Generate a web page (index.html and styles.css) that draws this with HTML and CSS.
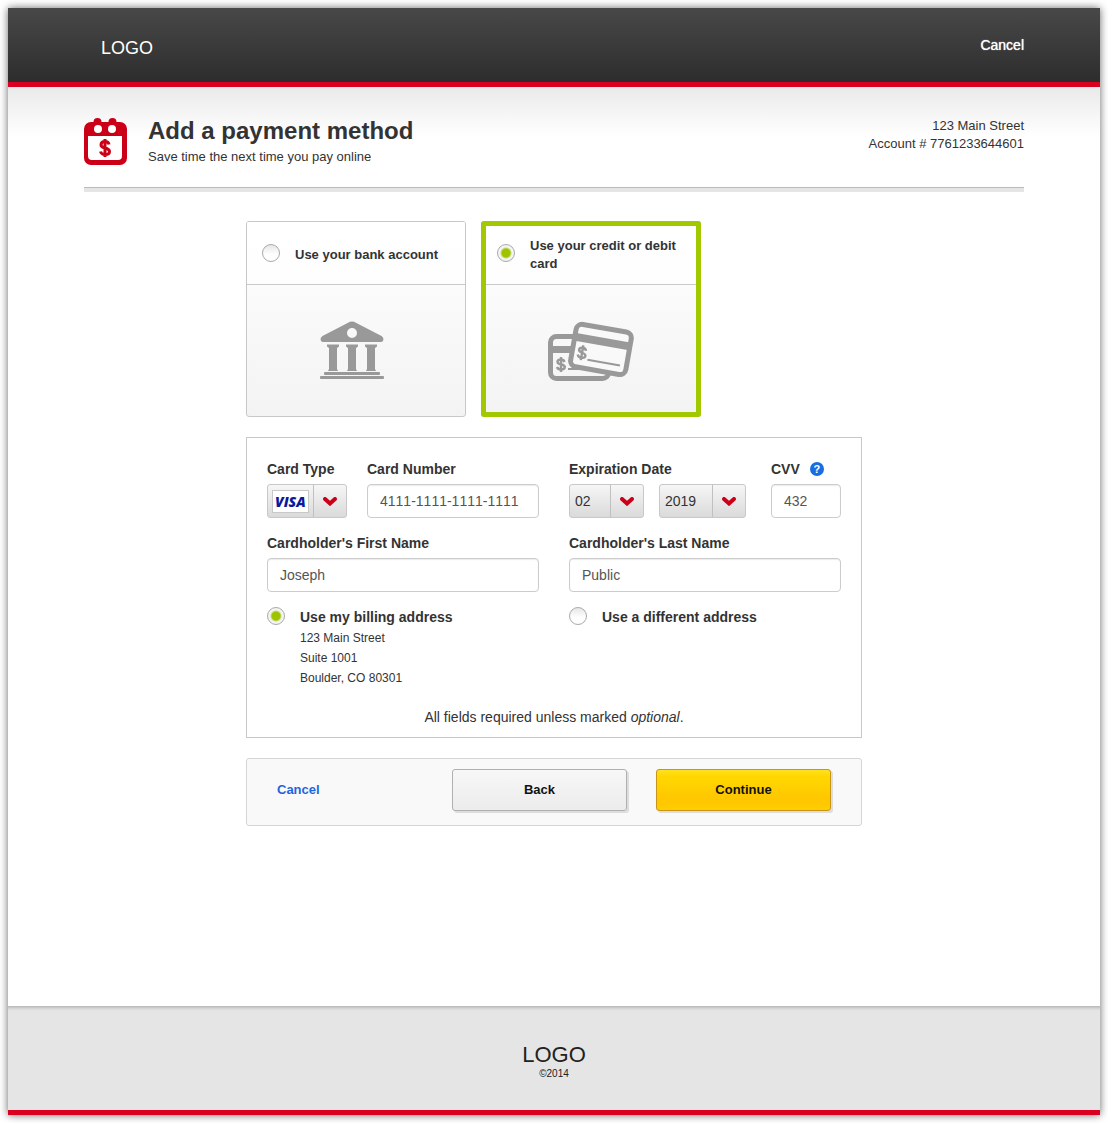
FILE: index.html
```html
<!DOCTYPE html>
<html lang="en">
<head>
<meta charset="utf-8">
<meta name="viewport" content="width=device-width, initial-scale=1">
<title>Add a payment method</title>
<link rel="stylesheet" href="styles.css">
</head>
<body>
<div class="page">
  <header class="topbar">
    <div class="container topbar-inner">
      <span class="logo">LOGO</span>
      <a class="topbar-cancel" href="#">Cancel</a>
    </div>
  </header>

  <main class="main">
    <div class="container">
      <div class="page-head">
        <svg class="page-icon" width="43" height="49" viewBox="0 0 43 49" aria-hidden="true">
          <circle cx="13.500" cy="5" r="4" fill="#cb0018"/>
          <circle cx="28.500" cy="5" r="4" fill="#cb0018"/>
          <rect x="0" y="5" width="43" height="43" rx="7" fill="#cb0018"/>
          <circle cx="14" cy="12" r="4" fill="#fff"/>
          <circle cx="28" cy="12" r="4" fill="#fff"/>
          <path d="M4 19H38V39Q38 43 34 43H8Q4 43 4 39Z" fill="#fff"/>
          <path d="M25 27.500C24.500 25 23 24.500 21 24.500C18.500 24.500 17 26 17 28C17 32 25.500 30 25.500 34.500C25.500 36.500 23.500 37.500 21 37.500C18.500 37.500 17 36.500 16.500 34.500M21 22V40" fill="none" stroke="#cb0018" stroke-width="3"/>
        </svg>
        <div class="page-titles">
          <h1>Add a payment method</h1>
          <p>Save time the next time you pay online</p>
        </div>
        <div class="account">
          <div>123 Main Street</div>
          <div>Account # 7761233644601</div>
        </div>
      </div>
    </div>

    <form class="payment">
      <div class="methods">
        <label class="method">
          <span class="method-title">
            <input class="radio" type="radio" name="method">
            <span class="method-text">Use your bank account</span>
          </span>
          <span class="method-art">
            <svg width="72" height="60" viewBox="0 0 72 60" aria-hidden="true" fill="#999">
              <path fill-rule="evenodd" d="M30 .8Q32 0 34 .8L61.500 15Q63.500 16 63.500 18.500Q63 21 61 21H3Q1 21 .5 18.500Q.5 16 2.500 15ZM32 7A5 5 0 1 0 32 17A5 5 0 1 0 32 7Z"/>
              <path d="M7 23.500H19V25.500L17 27V48L18 50H8L9 48V27L7 25.500ZM26 23.500H38V25.500L36 27V48L37 50H27L28 48V27L26 25.500ZM45 23.500H57V25.500L55 27V48L56 50H46L47 48V27L45 25.500Z"/>
              <rect x="4" y="51" width="56" height="3" rx="1"/>
              <rect x="0" y="55" width="64" height="3" rx="1"/>
            </svg>
          </span>
        </label>
        <label class="method method-selected">
          <span class="method-title">
            <input class="radio" type="radio" name="method" checked>
            <span class="method-text">Use your credit or debit card</span>
          </span>
          <span class="method-art">
            <svg width="86" height="62" viewBox="0 0 86 62" aria-hidden="true" fill="none" stroke="#999">
              <rect x="2.500" y="16.500" width="58" height="42" rx="6" stroke-width="5"/>
              <path d="M2 29.500H40" stroke-width="7"/>
              <path d="M16.500 42C16 40.500 15 39.500 13 39.500C11 39.500 9.500 40.500 9.500 42C9.500 45.500 16.800 43.500 16.800 47C16.800 48.500 15 49.500 13 49.500C11 49.500 9.500 48.500 9 47M13 37V52" stroke-width="2.400"/>
              <path d="M20 49H50" stroke-width="2"/>
              <g transform="translate(27 1) rotate(10)">
                <rect x="2.500" y="2" width="56" height="43" rx="6" fill="#f9f9f9" stroke-width="5"/>
                <path d="M2 15.500H58" stroke-width="8"/>
                <path d="M16 27.500C15.500 26 14.500 25 12.500 25C10.500 25 9 26 9 27.500C9 31 16.300 29 16.300 32.500C16.300 34 14.500 35 12.500 35C10.500 35 9 34 8.500 32.500M12.500 22.500V37.500" stroke-width="2.400"/>
                <path d="M19 36H52" stroke-width="2"/>
              </g>
            </svg>
          </span>
        </label>
      </div>

      <div class="panel">
        <div class="fields">
          <div class="row">
            <div class="field">
              <label for="card-type">Card Type</label>
              <div class="select card-type">
                <span class="badge"></span>
                <select id="card-type"><option>VISA</option></select>
                <svg class="chevron" width="14" height="9" viewBox="0 0 14 9" aria-hidden="true"><path d="M2 2L7 6.500L12 2" fill="none" stroke="#cb0018" stroke-width="4" stroke-linecap="round"/></svg>
              </div>
            </div>
            <div class="field grow">
              <label for="card-number">Card Number</label>
              <input class="text" id="card-number" type="text" value="4111-1111-1111-1111">
            </div>
          </div>
          <div class="row row-expiry">
            <div class="field">
              <label for="exp-month">Expiration Date</label>
              <div class="expiry">
                <div class="select month">
                  <select id="exp-month"><option>02</option></select>
                  <svg class="chevron" width="14" height="9" viewBox="0 0 14 9" aria-hidden="true"><path d="M2 2L7 6.500L12 2" fill="none" stroke="#cb0018" stroke-width="4" stroke-linecap="round"/></svg>
                </div>
                <div class="select year">
                  <select aria-label="Expiration year"><option>2019</option></select>
                  <svg class="chevron" width="14" height="9" viewBox="0 0 14 9" aria-hidden="true"><path d="M2 2L7 6.500L12 2" fill="none" stroke="#cb0018" stroke-width="4" stroke-linecap="round"/></svg>
                </div>
              </div>
            </div>
            <div class="field cvv">
              <div class="cvv-label">
                <label for="cvv">CVV</label>
                <button class="help" type="button">?</button>
              </div>
              <input class="text" id="cvv" type="text" value="432">
            </div>
          </div>

          <div class="field">
            <label for="first-name">Cardholder's First Name</label>
            <input class="text" id="first-name" type="text" value="Joseph">
          </div>
          <div class="field">
            <label for="last-name">Cardholder's Last Name</label>
            <input class="text" id="last-name" type="text" value="Public">
          </div>

          <div class="choice">
            <input class="radio" id="addr-billing" type="radio" name="address" checked>
            <div>
              <label for="addr-billing">Use my billing address</label>
              <address>123 Main Street<br>Suite 1001<br>Boulder, CO 80301</address>
            </div>
          </div>
          <div class="choice">
            <input class="radio" id="addr-other" type="radio" name="address">
            <label for="addr-other">Use a different address</label>
          </div>
        </div>
        <p class="note">All fields required unless marked <em>optional</em>.</p>
      </div>

      <div class="actions">
        <a class="actions-cancel" href="#">Cancel</a>
        <button class="button" type="button">Back</button>
        <button class="button button-primary" type="submit">Continue</button>
      </div>
    </form>
  </main>

  <footer class="footer">
    <div class="footer-logo">LOGO</div>
    <div class="copyright">©2014</div>
  </footer>
</div>
</body>
</html>
```
FILE: styles.css
```css
*, *::before, *::after { box-sizing: border-box; }

body {
  margin: 0;
  padding: 8px;
  background: #fff;
  color: #333;
  font: 13px/18px "Liberation Sans", Arial, Helvetica, sans-serif;
}

h1, p { margin: 0; }
a { text-decoration: none; }
input, select, button { font: inherit; margin: 0; }

.page {
  display: flex;
  flex-direction: column;
  min-height: calc(100vh - 16px);
  background: #fff;
  box-shadow: 0 0 8px rgba(0, 0, 0, 0.6);
}

.container {
  width: 100%;
  max-width: 940px;
  margin: 0 auto;
}

/* Top bar */
.topbar {
  background: linear-gradient(#484848, #2d2d2d);
  border-bottom: 5px solid #dc0020;
}
.topbar-inner {
  display: flex;
  justify-content: space-between;
  padding: 27px 0 21px 17px;
}
.logo {
  color: #fff;
  font-size: 18px;
  line-height: 26px;
}
.topbar-cancel {
  color: #fff;
  font-size: 14px;
  line-height: 20px;
  text-shadow: 0 0 1px #fff;
}

/* Page heading */
.main {
  flex: 1;
  background: linear-gradient(#eaeaea, #fff 50px);
}
.page-head {
  display: flex;
  align-items: flex-start;
  padding: 30px 0 21px;
  border-bottom: 4px solid #e5e5e5;
  box-shadow: inset 0 -1px 0 #bbb;
}
.page-icon {
  flex: none;
  margin-right: 21px;
}
.page-titles { flex: 1; }
.page-titles h1 {
  margin-bottom: 2px;
  font-size: 24px;
  line-height: 28px;
}
.page-titles p { line-height: 20px; }
.account { text-align: right; }

/* Payment methods */
.payment {
  width: 100%;
  max-width: 616px;
  margin: 29px auto 0;
}
.methods {
  display: flex;
  gap: 15px;
}
.method {
  display: flex;
  flex-direction: column;
  width: 220px;
  border: 1px solid #c8c8c8;
  border-radius: 3px;
  background: linear-gradient(#fff, #f3f3f3);
}
.method-selected {
  outline: 5px solid #a2c800;
  outline-offset: -5px;
}
.method-title {
  display: flex;
  align-items: center;
  gap: 15px;
  height: 63px;
  padding: 0 16px 0 15px;
  border-bottom: 1px solid #c8c8c8;
  background: rgba(255, 255, 255, 0.5);
}
.method-text {
  padding-top: 4px;
  font-weight: bold;
}
.method-art {
  display: flex;
  justify-content: center;
  align-items: center;
  height: 131px;
}

.radio {
  appearance: none;
  flex: none;
  width: 18px;
  height: 18px;
  border: 1px solid #aaa;
  border-radius: 50%;
  background: linear-gradient(#e6e6e6, #fff 60%);
}
.radio:checked {
  background: radial-gradient(circle, #9ec400 4px, #f4f4f4 6px);
}

/* Card form */
.panel {
  margin-top: 20px;
  padding: 21px 20px 10px;
  border: 1px solid #c8c8c8;
}
.fields {
  display: grid;
  grid-template-columns: 1fr 1fr;
  gap: 15px 30px;
}
.row {
  display: flex;
  gap: 20px;
}
.row-expiry { justify-content: space-between; }
.field {
  display: flex;
  flex-direction: column;
  gap: 5px;
}
.grow { flex: 1; }
.field label,
.choice label {
  font-size: 14px;
  font-weight: bold;
  line-height: 20px;
}
.text {
  width: 100%;
  height: 34px;
  padding: 0 12px;
  border: 1px solid #ccc;
  border-radius: 4px;
  background: #fff;
  box-shadow: inset 0 1px 1px rgba(0, 0, 0, 0.08);
  color: #555;
  font-size: 14px;
  font-kerning: none;
}
.expiry {
  display: flex;
  gap: 15px;
}

.select {
  display: grid;
  grid-template-columns: 1fr 33px;
  align-items: center;
  height: 34px;
  border: 1px solid #c8c8c8;
  border-radius: 3px;
  background: linear-gradient(#f6f6f6, #dadada);
}
.select select {
  grid-area: 1 / 1 / 2 / 3;
  width: 100%;
  height: 32px;
  padding: 0 5px;
  appearance: none;
  border: 0;
  background: none;
  color: #333;
  font-size: 14px;
}
.chevron {
  grid-area: 1 / 2 / 2 / 3;
  justify-self: center;
  pointer-events: none;
}
.select::after {
  content: "";
  grid-area: 1 / 2 / 2 / 3;
  height: 32px;
  border-left: 1px solid #c0c0c0;
  pointer-events: none;
}
.card-type { width: 80px; }
.month { width: 75px; }
.year { width: 87px; }
.badge {
  grid-area: 1 / 1 / 2 / 2;
  justify-self: center;
  width: 37px;
  height: 23px;
  border: 1px solid #c8c8c8;
  background: #fff;
}
.select.card-type select {
  padding: 0 7px;
  color: #0b189c;
  font: italic 800 14px "Open Sans", "Liberation Sans", sans-serif;
}

.cvv { width: 70px; }
.cvv-label {
  display: flex;
  align-items: center;
  gap: 10px;
  height: 20px;
}
.help {
  width: 14px;
  height: 14px;
  padding: 0;
  border: 0;
  border-radius: 50%;
  background: #1a6de0;
  color: #fff;
  font-size: 11px;
  font-weight: bold;
  line-height: 14px;
}

.choice {
  display: flex;
  align-items: flex-start;
  gap: 15px;
}
address {
  margin-top: 1px;
  font-size: 12px;
  font-style: normal;
  line-height: 20px;
}
.note {
  margin-top: 19px;
  font-size: 14px;
  line-height: 20px;
  text-align: center;
}

/* Actions */
.actions {
  display: flex;
  align-items: center;
  gap: 29px;
  margin: 20px 0;
  padding: 10px 30px 14px;
  border: 1px solid #d5d5d5;
  border-radius: 3px;
  background: #f9f9f9;
}
.actions-cancel {
  flex: 1;
  color: #1f66dd;
  font-weight: bold;
}
.button {
  width: 175px;
  height: 42px;
  border: 1px solid #b0b0b0;
  border-radius: 3px;
  background: linear-gradient(#f7f7f7, #ececec);
  box-shadow: 2px 2px 0 #ddd;
  color: #111;
  font-weight: bold;
}
.button-primary {
  border-color: #c6951a;
  background: linear-gradient(#ffe11f, #ffd800 15%, #ffc600 75%, #ffcd00);
}

/* Footer */
.footer {
  padding: 36px 0 30px;
  border-bottom: 5px solid #dc0020;
  background: linear-gradient(#b8b8b8, #dadada 3px, #e5e5e5 5px);
  color: #222;
  text-align: center;
}
.footer-logo {
  font-size: 22px;
  line-height: 26px;
}
.copyright {
  font-size: 10px;
  line-height: 12px;
}
```
